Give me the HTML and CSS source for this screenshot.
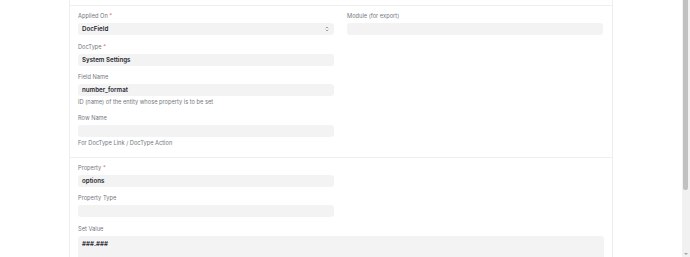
FILE: index.html
```html
<!DOCTYPE html>
<html>

<head>
    <meta charset="UTF-8" />
    <meta name="viewport" content="width=device-width, initial-scale=1.0">
    <title>Property Setter</title>
    <link rel="stylesheet" href="styles.css">
</head>

<body>
    <div class="page">
        <div class="gutter"></div>

        <!-- form card -->
        <div class="form-card">
            <div class="prev-section"></div>

            <section class="form-section">
                <div class="two-col">
                    <div class="col">
                        <div class="field">
                            <div class="label">Applied On <span class="reqd">*</span></div>
                            <div class="input select">
                                <span>DocField</span>
                                <svg class="select-arrows" width="4" height="6" viewBox="0 0 4 6">
                                    <path d="M0.8 2.2 L2 1 L3.2 2.2 M0.8 3.8 L2 5 L3.2 3.8" fill="none" stroke="#6b6b6b" stroke-width="0.6" />
                                </svg>
                            </div>
                        </div>
                        <div class="field">
                            <div class="label">DocType <span class="reqd">*</span></div>
                            <div class="input">System Settings</div>
                        </div>
                        <div class="field">
                            <div class="label">Field Name</div>
                            <div class="input">number_format</div>
                            <div class="desc">ID (name) of the entity whose property is to be set</div>
                        </div>
                        <div class="field last">
                            <div class="label">Row Name</div>
                            <div class="input"></div>
                            <div class="desc">For DocType Link / DocType Action</div>
                        </div>
                    </div>
                    <div class="col">
                        <div class="field">
                            <div class="label">Module (for export)</div>
                            <div class="input"></div>
                        </div>
                    </div>
                </div>
            </section>

            <section class="form-section">
                <div class="two-col">
                    <div class="col">
                        <div class="field">
                            <div class="label">Property <span class="reqd">*</span></div>
                            <div class="input">options</div>
                        </div>
                        <div class="field">
                            <div class="label">Property Type</div>
                            <div class="input"></div>
                        </div>
                    </div>
                    <div class="col"></div>
                </div>
                <div class="field last">
                    <div class="label">Set Value</div>
                    <div class="input textarea">###.###</div>
                </div>
            </section>
        </div>

        <div class="spacer"></div>

        <!-- scrollbar -->
        <div class="scrollbar">
            <div class="thumb"></div>
            <div class="arrow"></div>
        </div>
    </div>
</body>

</html>
```

FILE: styles.css
```css
* {
    margin: 0;
    padding: 0;
    box-sizing: border-box;
}

body {
    background: #fff;
    font-family: Inter, "Noto Sans", sans-serif;
    color: #1f272e;
}

.page {
    display: flex;
    height: 257px;
    overflow: hidden;
}

.gutter {
    width: 69px;
    flex: none;
}

/* the card with the form */
.form-card {
    width: 544px;
    flex: none;
    border-left: 1px solid #ededed;
    border-right: 1px solid #ededed;
}

.prev-section {
    height: 5px;
}

.form-section {
    border-top: 1px solid #efefef;
    padding: 6px 8px 10px 8px;
}

.two-col {
    display: grid;
    grid-template-columns: 256px 256px;
    column-gap: 13px;
}

.field {
    margin-bottom: 7.5px;
}

.field.last {
    margin-bottom: 0;
}

.label {
    font-size: 5.7px;
    line-height: 8px;
    height: 8px;
    color: #737880;
    margin-bottom: 3px;
    white-space: nowrap;
}

.reqd {
    color: #e86c6c;
}

.input {
    height: 12px;
    background: #f3f3f3;
    border-radius: 3px;
    padding: 0 4px;
    font-size: 6.2px;
    line-height: 12px;
    font-weight: 600;
    color: #1f272e;
    white-space: nowrap;
}

.select {
    display: flex;
    justify-content: space-between;
    align-items: center;
}

.select-arrows {
    margin-right: 1px;
}

.textarea {
    height: 50px;
    line-height: 14px;
    padding-top: 1px;
    padding-left: 4px;
}

.desc {
    font-size: 5.7px;
    line-height: 8px;
    margin-top: 2px;
    color: #737880;
    white-space: nowrap;
}

.spacer {
    flex: 1;
}

/* fake browser scrollbar */
.scrollbar {
    width: 8px;
    flex: none;
    background: #f1f1f1;
    position: relative;
}

.thumb {
    margin: 0 2px 0 1px;
    height: 190px;
    background: #c1c1c1;
    border-radius: 0 0 2px 2px;
}

.arrow {
    position: absolute;
    left: 2px;
    bottom: 2px;
    width: 0;
    height: 0;
    border-left: 2px solid transparent;
    border-right: 2px solid transparent;
    border-top: 2px solid #a3a3a3;
}
```
